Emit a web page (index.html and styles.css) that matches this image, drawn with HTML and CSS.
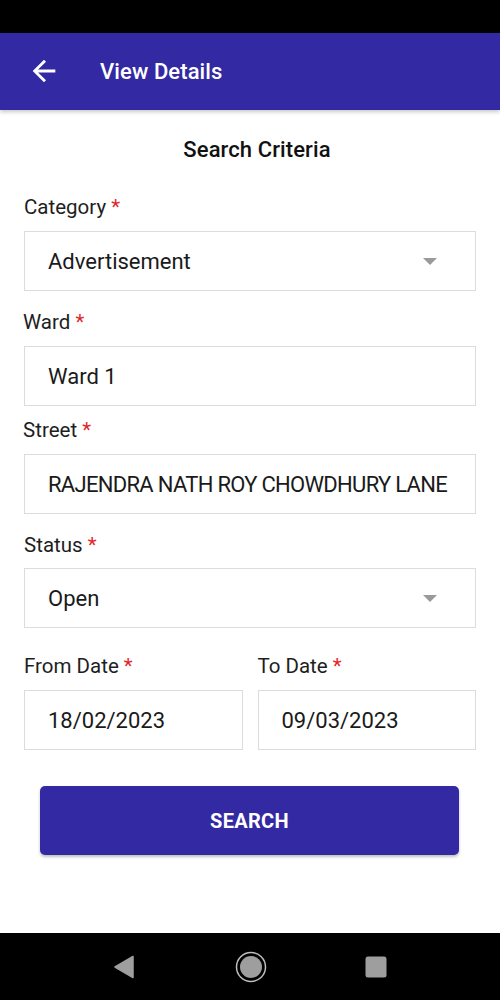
FILE: index.html
```html
<!DOCTYPE html>
<html>
<head>
<meta charset="utf-8">
<link rel="stylesheet" href="styles.css">
</head>
<body>
<div class="statusbar"></div>
<header class="appbar">
  <svg class="back" width="34" height="34" viewBox="0 0 24 24"><path d="M20 11H7.83l5.59-5.59L12 4l-8 8 8 8 1.41-1.41L7.83 13H20v-2z" fill="#fff"/></svg>
  <span class="title">View Details</span>
</header>
<main class="content">
  <h1 class="heading">Search Criteria</h1>

  <div class="label l-cat">Category <span class="req">*</span></div>
  <div class="box">
    <span class="value">Advertisement</span>
    <span class="caret"></span>
  </div>

  <div class="label l-ward">Ward <span class="req">*</span></div>
  <div class="box"><span class="value">Ward 1</span></div>

  <div class="label l-street">Street <span class="req">*</span></div>
  <div class="box"><span class="value caps">RAJENDRA NATH ROY CHOWDHURY LANE</span></div>

  <div class="label l-status">Status <span class="req">*</span></div>
  <div class="box box-status">
    <span class="value">Open</span>
    <span class="caret"></span>
  </div>

  <div class="dates">
    <div class="date-col">
      <div class="label l-date">From Date <span class="req">*</span></div>
      <div class="box box-date"><span class="value">18/02/2023</span></div>
    </div>
    <div class="date-col">
      <div class="label l-date">To Date <span class="req">*</span></div>
      <div class="box box-date"><span class="value">09/03/2023</span></div>
    </div>
  </div>

  <button class="search">SEARCH</button>
</main>
<nav class="navbar">
  <svg width="20" height="24" viewBox="0 0 20 24"><path d="M19 1.5 L19 22.5 L1 12 Z" fill="#9e9e9e" stroke="#9e9e9e" stroke-width="1.5" stroke-linejoin="round"/></svg>
  <svg width="32" height="32" viewBox="0 0 32 32"><circle cx="16" cy="16" r="14.5" fill="none" stroke="#bdbdbd" stroke-width="1.5"/><circle cx="16" cy="16" r="11" fill="#9e9e9e"/></svg>
  <svg width="22" height="22" viewBox="0 0 22 22"><rect x="0.5" y="0.5" width="21" height="21" rx="2.5" fill="#9e9e9e"/></svg>
</nav>
</body>
</html>
```

FILE: styles.css
```css
* { box-sizing: border-box; }
html, body { margin: 0; padding: 0; }
body {
  width: 500px;
  height: 1000px;
  display: flex;
  flex-direction: column;
  font-family: Roboto, "Liberation Sans", sans-serif;
  color: #1c1c1c;
  background: #fff;
  overflow: hidden;
}
.statusbar { height: 33px; background: #000; flex: none; }
.appbar {
  height: 77px;
  flex: none;
  background: #3329a3;
  display: flex;
  align-items: center;
  padding-left: 27px;
  box-shadow: 0 2px 4px rgba(0,0,0,0.22);
  position: relative;
  z-index: 1;
}
.back { margin-right: 39px; margin-top: -1px; }
.title {
  color: #fff;
  font-size: 22px;
  font-weight: 500;
  letter-spacing: 0.1px;
}
.content {
  flex: 1;
  padding: 0 24px;
}
.heading {
  margin: 28px 0 0;
  padding-left: 14px;
  height: 24px;
  line-height: 24px;
  text-align: center;
  font-size: 22px;
  font-weight: 500;
  letter-spacing: 0.1px;
  color: #111;
}
.label {
  height: 24px;
  line-height: 24px;
  font-size: 20.5px;
  color: #1e1e1e;
  white-space: nowrap;
}
.req { color: #e3262c; }
.l-cat { margin-top: 33px; }
.l-ward { margin-top: 19px; margin-left: -1px; }
.l-street { margin-top: 12px; margin-left: -1px; }
.l-status { margin-top: 19px; }
.l-date { margin-top: 26px; }
.box {
  margin-top: 12px;
  height: 60px;
  border: 1px solid #dcdcdc;
  display: flex;
  align-items: center;
  justify-content: space-between;
  padding: 0 38px 0 23px;
}
.box-status { margin-top: 11px; }
.value {
  font-size: 22px;
  color: #1a1a1a;
  white-space: nowrap;
  margin-top: 1px;
}
.caps { letter-spacing: -0.7px; }
.caret {
  width: 0;
  height: 0;
  border-left: 7px solid transparent;
  border-right: 7px solid transparent;
  border-top: 7px solid #9a9a9a;
}
.dates {
  display: grid;
  grid-template-columns: 1fr 1fr;
  column-gap: 15px;
}
.search {
  display: block;
  margin: 36px 17px 0 16px;
  width: calc(100% - 33px);
  height: 69px;
  border: none;
  border-radius: 5px;
  background: #3329a3;
  color: #fff;
  font-family: Roboto, "Liberation Sans", sans-serif;
  font-size: 20px;
  font-weight: 700;
  letter-spacing: 0.3px;
  box-shadow: 0 2px 3px rgba(0,0,0,0.25);
}
.navbar {
  height: 67px;
  flex: none;
  background: #000;
  display: flex;
  align-items: center;
  justify-content: center;
}
.navbar svg:nth-child(1) { margin-right: 101px; }
.navbar svg:nth-child(2) { margin-right: 98px; }
```
